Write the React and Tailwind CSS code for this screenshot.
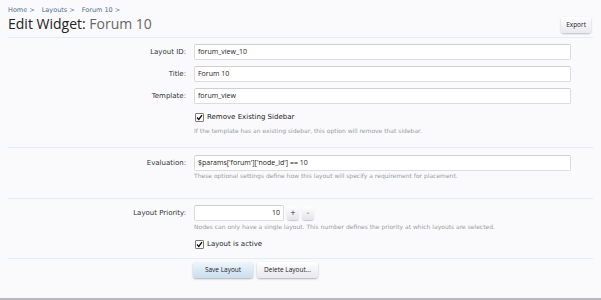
import React from "react";

function Check() {
  return (
    <span className="inline-flex items-center justify-center w-[9px] h-[9px] bg-white border border-[#7a7a7a] rounded-[1px] shrink-0">
      <svg width="7" height="7" viewBox="0 0 7 7">
        <path d="M1 3.6 L2.8 5.4 L6 1.2" stroke="#111" strokeWidth="1.4" fill="none" />
      </svg>
    </span>
  );
}

function Row({ label, children, mt }) {
  return (
    <div className={`flex items-center ${mt}`}>
      <div className="w-[186px] text-right text-[7px] text-[#333] font-['DejaVu_Sans',sans-serif] leading-[16px]">{label}</div>
      <div className="ml-[8px] flex-1">{children}</div>
    </div>
  );
}

function Input({ value, w = "w-[377px]", right }) {
  return (
    <div className={`${w} h-[16px] bg-white border border-[#dcdcdc] border-t-[#cfcfcf] rounded-[2px] flex items-center px-[3px] text-[7px] text-[#222] font-['Open_Sans',sans-serif] ${right ? "justify-end" : ""}`}>
      {value}
    </div>
  );
}

function Hint({ children, mt = "mt-0" }) {
  return (
    <div className={`ml-[194px] ${mt} text-[6px] leading-[10px] text-[#9a9a9a] font-['DejaVu_Sans',sans-serif] whitespace-nowrap`}>{children}</div>
  );
}

function CheckRow({ children, mt }) {
  return (
    <div className={`ml-[195px] ${mt} flex items-center gap-[3px] h-[12px] text-[7px] text-[#222] font-['DejaVu_Sans',sans-serif]`}>
      <Check />
      <span>{children}</span>
    </div>
  );
}

function Sep() {
  return <div className="mx-[8px] h-px bg-[#e3eef0]" />;
}

export default function App() {
  return (
    <div className="w-[601px] h-[300px] bg-[#fafafd] overflow-hidden relative">
      <div className="mx-[8px] h-[38px] border-b border-[#e3eef0] flex flex-col">
        <div className="pt-[7px] h-[14px] text-[6.5px] leading-[7px] text-[#4d6f8f] font-['DejaVu_Sans',sans-serif] flex gap-[7px]">
          <span>Home &gt;</span>
          <span>Layouts &gt;</span>
          <span>Forum 10 &gt;</span>
        </div>
        <div className="flex justify-between items-center">
          <div className="text-[14px] leading-[20px] font-['Open_Sans',sans-serif] text-[#222]">
            Edit Widget: <span className="text-[#666]">Forum 10</span>
          </div>
          <div className="mr-[2px] mt-[2px] h-[16px] px-[5px] flex items-center rounded-[3px] bg-gradient-to-b from-white to-[#eaeaee] shadow-[0_1px_2px_rgba(0,0,0,0.25)] text-[6.5px] text-[#222] font-['Open_Sans',sans-serif]">
            Export
          </div>
        </div>
      </div>

      <Row label="Layout ID:" mt="mt-[6px]"><Input value="forum_view_10" /></Row>
      <Row label="Title:" mt="mt-[6px]"><Input value="Forum 10" /></Row>
      <Row label="Template:" mt="mt-[6px]"><Input value="forum_view" /></Row>
      <CheckRow mt="mt-[7px]">Remove Existing Sidebar</CheckRow>
      <Hint mt="mt-[3px]">If the template has an existing sidebar, this option will remove that sidebar.</Hint>
      <div className="h-[11px]" />
      <Sep />

      <Row label="Evaluation:" mt="mt-[7px]"><Input value="$params['forum']['node_id'] == 10" /></Row>
      <Hint>These optional settings define how this layout will specify a requirement for placement.</Hint>
      <div className="h-[17px]" />
      <Sep />

      <Row label="Layout Priority:" mt="mt-[6px]">
        <div className="flex items-center gap-[3px]">
          <Input value="10" w="w-[90px]" right />
          <div className="w-[12px] h-[14px] rounded-[3px] bg-gradient-to-b from-white to-[#e4e4ea] shadow-[0_1px_1px_rgba(0,0,0,0.2)] flex items-center justify-center text-[7px] text-[#333] font-['DejaVu_Sans',sans-serif]">+</div>
          <div className="w-[12px] h-[14px] rounded-[3px] bg-gradient-to-b from-white to-[#e4e4ea] shadow-[0_1px_1px_rgba(0,0,0,0.2)] flex items-center justify-center text-[7px] text-[#333] font-['DejaVu_Sans',sans-serif]">-</div>
        </div>
      </Row>
      <Hint mt="mt-[1px]">Nodes can only have a single layout. This number defines the priority at which layouts are selected.</Hint>
      <CheckRow mt="mt-[6px]">Layout is active</CheckRow>
      <div className="h-[8px]" />
      <Sep />

      <div className="ml-[193px] mt-[3px] flex gap-[4px]">
        <div className="w-[60px] h-[16px] rounded-[3px] bg-gradient-to-b from-[#eef5fb] to-[#c9def0] shadow-[0_1px_2px_rgba(0,0,0,0.3)] flex items-center justify-center text-[6.5px] text-[#222] font-['Open_Sans',sans-serif]">Save Layout</div>
        <div className="w-[61px] h-[16px] rounded-[3px] bg-gradient-to-b from-white to-[#e8e8ee] shadow-[0_1px_2px_rgba(0,0,0,0.3)] flex items-center justify-center text-[6.5px] text-[#222] font-['Open_Sans',sans-serif]">Delete Layout...</div>
      </div>

      <div className="absolute left-0 right-0 bottom-0 h-[2px] bg-[#b9b9bd]" />
    </div>
  );
}
